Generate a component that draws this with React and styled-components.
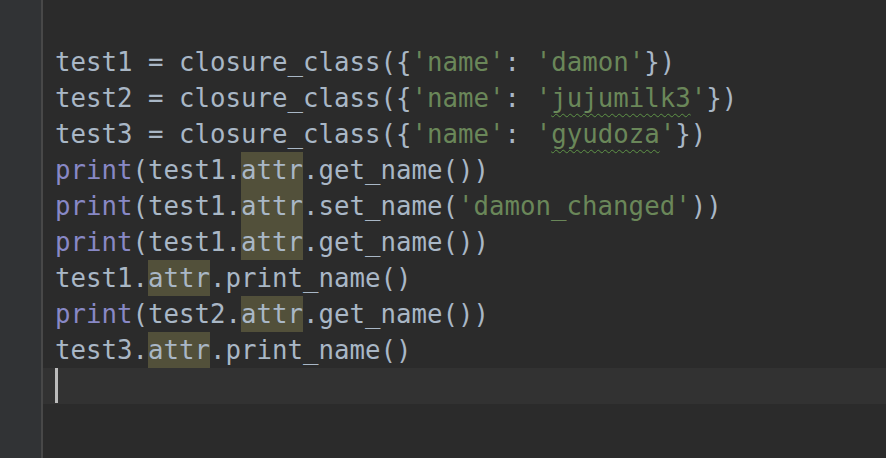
import React from 'react';
import styled, { createGlobalStyle } from 'styled-components';

const Global = createGlobalStyle`
  html, body {
    margin: 0;
    padding: 0;
    background: #2b2b2b;
    overflow: hidden;
  }
`;

const Editor = styled.div`
  display: flex;
  flex-direction: row;
  width: 886px;
  height: 458px;
  background: #2b2b2b;
`;

const Gutter = styled.div`
  width: 41px;
  flex-shrink: 0;
  background: #313335;
  border-right: 2px solid #484848;
`;

const Code = styled.div`
  flex: 1;
  display: flex;
  flex-direction: column;
  padding-top: 44px;
  font-family: "DejaVu Sans Mono", "Liberation Mono", monospace;
  font-size: 25.75px;
  color: #a9b7c6;
`;

const Line = styled.div`
  height: 36px;
  line-height: 36px;
  padding-left: 12px;
  white-space: pre;
  display: flex;
  align-items: stretch;
  background: ${p => (p.$current ? '#323232' : 'transparent')};
`;

const Kw = styled.span`
  color: #8888c6;
`;

const Str = styled.span`
  color: #6a8759;
`;

const Typo = styled.span`
  text-decoration: underline wavy #5f9447;
  text-decoration-thickness: 1px;
  text-underline-offset: 6px;
`;

const Hl = styled.span`
  background: #52503a;
`;

const Caret = styled.span`
  width: 3px;
  height: 35px;
  background: #bbbbbb;
`;

const App = () => (
  <>
    <Global />
    <Editor>
      <Gutter />
      <Code>
        <Line>test1 = closure_class({'{'}<Str>'name'</Str>: <Str>'damon'</Str>{'}'})</Line>
        <Line>test2 = closure_class({'{'}<Str>'name'</Str>: <Str>'<Typo>jujumilk3</Typo>'</Str>{'}'})</Line>
        <Line>test3 = closure_class({'{'}<Str>'name'</Str>: <Str>'<Typo>gyudoza</Typo>'</Str>{'}'})</Line>
        <Line><Kw>print</Kw>(test1.<Hl>attr</Hl>.get_name())</Line>
        <Line><Kw>print</Kw>(test1.<Hl>attr</Hl>.set_name(<Str>'damon_changed'</Str>))</Line>
        <Line><Kw>print</Kw>(test1.<Hl>attr</Hl>.get_name())</Line>
        <Line>test1.<Hl>attr</Hl>.print_name()</Line>
        <Line><Kw>print</Kw>(test2.<Hl>attr</Hl>.get_name())</Line>
        <Line>test3.<Hl>attr</Hl>.print_name()</Line>
        <Line $current><Caret /></Line>
      </Code>
    </Editor>
  </>
);

export default App;
